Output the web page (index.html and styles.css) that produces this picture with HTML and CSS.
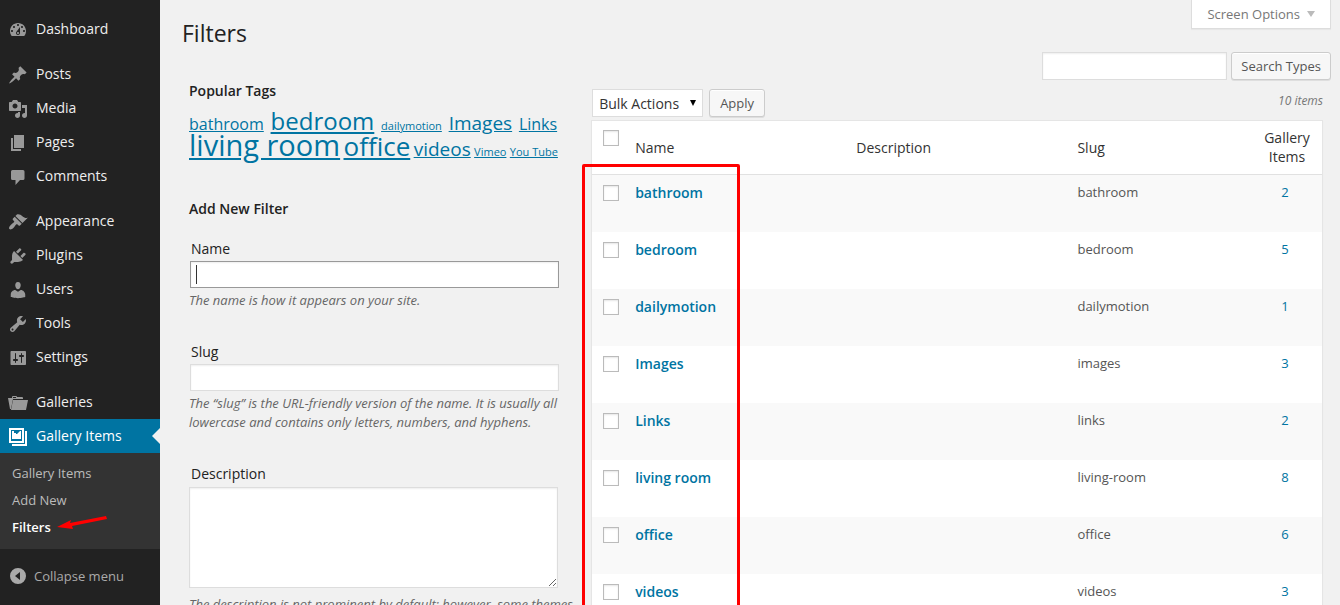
FILE: index.html
```html
<!DOCTYPE html>
<html lang="en">
<head>
<meta charset="utf-8">
<title>Filters</title>
<link rel="stylesheet" href="styles.css">
</head>
<body>
<div class="admin">
  <nav class="sidebar" aria-label="Main menu">
    <ul class="menu">
      <li><a href="#" class="menu-link"><svg viewBox="0 0 20 20"><path d="M3.76 16h12.48c1.1-1.37 1.76-3.11 1.76-5 0-4.42-3.58-8-8-8s-8 3.58-8 8c0 1.89.66 3.63 1.76 5zM10 4c.55 0 1 .45 1 1s-.45 1-1 1-1-.45-1-1 .45-1 1-1zM6 6c.55 0 1 .45 1 1s-.45 1-1 1-1-.45-1-1 .45-1 1-1zm8 0c.55 0 1 .45 1 1s-.45 1-1 1-1-.45-1-1 .45-1 1-1zm-5.37 5.55L12 7v6c0 1.1-.9 2-2 2s-2-.9-2-2c0-.57.24-1.08.63-1.45zM4 10c.55 0 1 .45 1 1s-.45 1-1 1-1-.45-1-1 .45-1 1-1zm12 0c.55 0 1 .45 1 1s-.45 1-1 1-1-.45-1-1 .45-1 1-1zm-5 3c0-.55-.45-1-1-1s-1 .45-1 1 .45 1 1 1 1-.45 1-1z"/></svg>Dashboard</a></li>
    </ul>
    <ul class="menu">
      <li><a href="#" class="menu-link"><svg viewBox="0 0 20 20"><path d="M10.44 3.02l1.82-1.82 6.36 6.35-1.83 1.82c-1.05-.68-2.48-.57-3.41.36l-.75.75c-.92.93-1.04 2.35-.35 3.41l-1.83 1.82-2.41-2.41-2.8 2.79c-.42.42-3.38 2.71-3.8 2.29s1.86-3.39 2.28-3.81l2.79-2.79L4.1 9.36l1.83-1.82c1.05.69 2.48.57 3.4-.36l.75-.75c.93-.92 1.05-2.35.36-3.41z"/></svg>Posts</a></li>
      <li><a href="#" class="menu-link"><svg viewBox="0 0 20 20"><path d="M13 11V4c0-.55-.45-1-1-1h-1.67L9 1H5L3.67 3H2c-.55 0-1 .45-1 1v7c0 .55.45 1 1 1h10c.55 0 1-.45 1-1zM7 4.5c1.38 0 2.5 1.12 2.5 2.5S8.38 9.5 7 9.5 4.5 8.38 4.5 7 5.62 4.5 7 4.5zM14 6h5v10.5c0 1.38-1.12 2.5-2.5 2.5S14 17.88 14 16.5s1.12-2.5 2.5-2.5c.17 0 .34.02.5.05V9h-3V6zm-4 8.05V13h2v3.5c0 1.38-1.12 2.5-2.5 2.5S7 17.88 7 16.5 8.12 14 9.5 14c.17 0 .34.02.5.05z"/></svg>Media</a></li>
      <li><a href="#" class="menu-link"><svg viewBox="0 0 20 20"><path d="M6 15V2h10v13H6zm-1 1h8v2H3V5h2v11z"/></svg>Pages</a></li>
      <li><a href="#" class="menu-link"><svg viewBox="0 0 20 20"><path d="M4.500 3h10.500q1.500 0 1.500 1.500v7q0 1.500-1.500 1.500h-3l-4.500 5v-5h-3q-1.500 0-1.500-1.500v-7q0-1.500 1.500-1.500z"/></svg>Comments</a></li>
    </ul>
    <ul class="menu">
      <li><a href="#" class="menu-link"><svg viewBox="0 0 20 20"><path d="M14.48 11.06L7.41 3.99l1.5-1.5c.5-.56 2.3-.47 3.51.32 1.21.8 1.43 1.28 2.91 2.1 1.18.64 2.45 1.26 4.45.85zm-.71.71L6.7 4.7 4.93 6.47c-.39.39-.39 1.02 0 1.41l1.06 1.06c.39.39.39 1.03 0 1.42-.6.6-1.43 1.11-2.21 1.69-.35.26-.7.53-1.01.84C1.43 14.23.4 16.08 1.4 17.07c.99 1 2.84-.03 4.18-1.36.31-.31.58-.66.85-1.02.57-.78 1.08-1.61 1.69-2.21.39-.39 1.02-.39 1.41 0l1.06 1.06c.39.39 1.02.39 1.41 0z"/></svg>Appearance</a></li>
      <li><a href="#" class="menu-link"><svg viewBox="0 0 20 20"><path d="M13.11 4.36L9.87 7.6 8 5.73l3.24-3.24c.35-.34 1.05-.2 1.56.32.52.51.66 1.21.31 1.55zm-8 1.77l.91-1.12 9.01 9.01-1.19.84c-.71.71-2.63 1.16-3.82 1.16H6.14L4.9 17.26c-.59.59-1.54.59-2.12 0-.59-.58-.59-1.53 0-2.12l1.24-1.24v-3.88c0-1.13.4-3.19 1.09-3.89zm7.26 3.97l3.24-3.24c.34-.35 1.04-.21 1.55.31.52.51.66 1.21.31 1.55l-3.24 3.25z"/></svg>Plugins</a></li>
      <li><a href="#" class="menu-link"><svg viewBox="0 0 20 20"><path d="M10 9.250c-2.270 0-2.730-3.440-2.730-3.440C7 4.020 7.820 2 9.970 2c2.160 0 2.980 2.020 2.710 3.810 0 0-.41 3.440-2.680 3.440zm0 2.570L12.720 10c2.390 0 4.520 2.330 4.520 4.530v2.490s-3.650 1.130-7.240 1.130c-3.650 0-7.240-1.130-7.240-1.130v-2.490c0-2.250 1.940-4.480 4.470-4.480z"/></svg>Users</a></li>
      <li><a href="#" class="menu-link"><svg viewBox="0 0 20 20"><path d="M16.68 9.77c-1.34 1.34-3.3 1.67-4.95.99l-5.41 6.52c-.99.99-2.59.99-3.58 0s-.99-2.59 0-3.57l6.52-5.42c-.68-1.65-.35-3.61.99-4.95 1.28-1.28 3.12-1.62 4.72-1.06l-2.89 2.89 2.82 2.82 2.86-2.87c.53 1.58.18 3.39-1.08 4.65zM3.810 16.210c.4.39 1.040.39 1.430 0 .4-.4.4-1.040 0-1.430-.39-.4-1.030-.4-1.430 0-.39.39-.39 1.030 0 1.430z"/></svg>Tools</a></li>
      <li><a href="#" class="menu-link"><svg viewBox="0 0 20 20"><path d="M18 16V4c0-.55-.45-1-1-1H3.500c-.55 0-1 .45-1 1v12c0 .55.45 1 1 1h13.500c.55 0 1-.45 1-1zM8 11h1c.55 0 1 .45 1 1s-.45 1-1 1H8v1.500c0 .28-.22.5-.5.5s-.5-.22-.5-.5V13H6c-.55 0-1-.45-1-1s.45-1 1-1h1V5.500c0-.28.22-.5.5-.5s.5.22.5.5V11zm5-2h-1c-.55 0-1-.45-1-1s.45-1 1-1h1V5.500c0-.28.22-.5.5-.5s.5.22.5.5V7h1c.55 0 1 .45 1 1s-.45 1-1 1h-1v5.500c0 .28-.22.5-.5.5s-.5-.22-.5-.5V9z"/></svg>Settings</a></li>
    </ul>
    <ul class="menu">
      <li><a href="#" class="menu-link"><svg viewBox="0 0 20 20"><path fill-rule="evenodd" d="M0 5h4V4q0-1 1-1h3q1 0 1 1h5q1 0 1 1v1H5L3 16H2zM5 4v1h3V4z"/><path d="M5 7h15l-2 10H3z"/></svg>Galleries</a></li>
      <li class="current">
        <a href="#" class="menu-link"><svg viewBox="0 0 20 20"><path fill-rule="evenodd" d="M1 1h15v15H1zM3 3v11h11V3zM17 4h2v15H4v-2h13z"/><path d="M4 4h2v2h2v1h1l3-3h1v8H4zM4 6" /></svg>Gallery Items</a>
        <ul class="submenu">
          <li><a href="#">Gallery Items</a></li>
          <li><a href="#">Add New</a></li>
          <li><a href="#" class="active" aria-current="page">Filters</a><svg class="pointer" viewBox="0 0 50 14"><path d="M0 11L14 4l-1 3L49 0l1 3-35 7 1 3z"/></svg></li>
        </ul>
      </li>
    </ul>
    <button type="button" class="collapse"><svg viewBox="0 0 20 20"><path fill-rule="evenodd" d="M10 2a8 8 0 1 0 0 16 8 8 0 0 0 0-16zM12 6v8l-5-4z"/></svg>Collapse menu</button>
  </nav>

  <main class="content">
    <button type="button" class="screen-options">Screen Options<span class="caret-down"></span></button>
    <h1>Filters</h1>
    <div class="columns">
      <div class="col-left">
        <section class="tags">
          <h2>Popular Tags</h2>
          <p class="cloud"><a href="#" class="t2">bathroom</a>&nbsp; <a href="#" class="t4">bedroom</a>&nbsp; <a href="#" class="t1">dailymotion</a>&nbsp; <a href="#" class="t3">Images</a>&nbsp; <a href="#" class="t2">Links</a> <a href="#" class="t6">living room</a> <a href="#" class="t5">office</a> <a href="#" class="t3">videos</a> <a href="#" class="t1">Vimeo</a> <a href="#" class="t1">You Tube</a></p>
        </section>
        <form class="add-form">
          <h2>Add New Filter</h2>
          <div class="field">
            <label for="f-name">Name</label>
            <div class="focus-wrap"><input type="text" id="f-name" class="focused"><span class="text-caret"></span></div>
            <p>The name is how it appears on your site.</p>
          </div>
          <div class="field">
            <label for="f-slug">Slug</label>
            <input type="text" id="f-slug">
            <p>The “slug” is the URL-friendly version of the name. It is usually all lowercase and contains only letters, numbers, and hyphens.</p>
          </div>
          <div class="field">
            <label for="f-desc">Description</label>
            <textarea id="f-desc"></textarea>
            <p>The description is not prominent by default; however, some themes may show it.</p>
          </div>
        </form>
      </div>

      <div class="col-right">
        <form class="search"><input type="search" aria-label="Search Types"><button type="button" class="btn">Search Types</button></form>
        <div class="list">
          <div class="tablenav">
            <div class="select-wrap"><select aria-label="Bulk actions"><option>Bulk Actions</option></select></div>
            <button type="button" class="btn">Apply</button>
            <span class="count">10 items</span>
          </div>
          <div class="table-wrap">
            <table>
              <thead>
                <tr><th class="check"><input type="checkbox" aria-label="Select all"></th><th class="name">Name</th><th class="desc">Description</th><th class="slug">Slug</th><th class="posts">Gallery Items</th></tr>
              </thead>
              <tbody>
                <tr><td class="check"><input type="checkbox" aria-label="Select bathroom"></td><td><a class="row-title" href="#">bathroom</a></td><td></td><td>bathroom</td><td class="posts"><a href="#">2</a></td></tr>
                <tr><td class="check"><input type="checkbox" aria-label="Select bedroom"></td><td><a class="row-title" href="#">bedroom</a></td><td></td><td>bedroom</td><td class="posts"><a href="#">5</a></td></tr>
                <tr><td class="check"><input type="checkbox" aria-label="Select dailymotion"></td><td><a class="row-title" href="#">dailymotion</a></td><td></td><td>dailymotion</td><td class="posts"><a href="#">1</a></td></tr>
                <tr><td class="check"><input type="checkbox" aria-label="Select Images"></td><td><a class="row-title" href="#">Images</a></td><td></td><td>images</td><td class="posts"><a href="#">3</a></td></tr>
                <tr><td class="check"><input type="checkbox" aria-label="Select Links"></td><td><a class="row-title" href="#">Links</a></td><td></td><td>links</td><td class="posts"><a href="#">2</a></td></tr>
                <tr><td class="check"><input type="checkbox" aria-label="Select living room"></td><td><a class="row-title" href="#">living room</a></td><td></td><td>living-room</td><td class="posts"><a href="#">8</a></td></tr>
                <tr><td class="check"><input type="checkbox" aria-label="Select office"></td><td><a class="row-title" href="#">office</a></td><td></td><td>office</td><td class="posts"><a href="#">6</a></td></tr>
                <tr><td class="check"><input type="checkbox" aria-label="Select videos"></td><td><a class="row-title" href="#">videos</a></td><td></td><td>videos</td><td class="posts"><a href="#">3</a></td></tr>
              </tbody>
            </table>
            <div class="highlight"></div>
          </div>
        </div>
      </div>
    </div>
  </main>
</div>
</body>
</html>
```
FILE: styles.css
```css
* { box-sizing: border-box; }
body {
  margin: 0;
  height: 100vh;
  overflow: hidden;
  background: #f1f1f1;
  color: #333;
  font: 13px/19px "Open Sans", sans-serif;
}
a { color: #0074a2; }
h1, h2, p, ul { margin: 0; padding: 0; }
ul { list-style: none; }
button, input, select, textarea { font: inherit; }
.admin { display: flex; min-height: 100vh; }

/* Sidebar */
.sidebar { flex: none; width: 160px; padding-top: 12px; background: #222; }
.menu { margin-bottom: 11px; }
.menu-link {
  display: flex;
  gap: 8px;
  height: 34px;
  padding: 8px 8px 0;
  color: #eee;
  font-size: 14px;
  line-height: 18px;
  text-decoration: none;
}
.menu-link svg { width: 20px; height: 20px; fill: #999; flex: none; }
.current { position: relative; }
.current .menu-link { background: #0074a2; color: #fff; }
.current .menu-link svg { fill: #fff; }
.current::after {
  content: "";
  position: absolute;
  top: 9px;
  right: 0;
  border: 8px solid transparent;
  border-right-color: #f1f1f1;
  border-left: 0;
}
.submenu { padding: 7px 0 8px; background: #333; }
.submenu li { display: flex; align-items: center; gap: 6px; height: 27px; padding: 0 12px; }
.submenu a { color: #bbb; text-decoration: none; }
.submenu .active { color: #fff; font-weight: 600; }
.pointer { width: 50px; height: 14px; fill: #f00; margin-bottom: 10px; }
.collapse {
  display: flex;
  align-items: center;
  gap: 6px;
  width: 100%;
  height: 34px;
  margin-top: -1px;
  padding: 0 8px;
  border: 0;
  background: none;
  color: #aaa;
}
.collapse svg { width: 20px; height: 20px; fill: #aaa; }

/* Page */
.content { position: relative; flex: 1; min-width: 0; padding: 19px 9px 0 22px; }
.screen-options {
  position: absolute;
  top: 0;
  right: 9px;
  display: flex;
  align-items: center;
  gap: 7px;
  height: 29px;
  padding: 0 15px;
  border: 1px solid #ddd;
  border-top: 0;
  background: #fff;
  color: #777;
  box-shadow: 0 1px 1px rgba(0, 0, 0, .04);
}
.caret-down { border: 4px solid transparent; border-top: 6px solid #bbb; border-bottom: 0; }
h1 { color: #222; font-size: 23px; font-weight: 400; line-height: 29px; }
.columns { display: grid; grid-template-columns: 35fr 65fr; }
.columns > * { min-width: 0; }

h2 { color: #222; font-size: 14px; font-weight: 600; line-height: 20px; }
.col-left { padding: 33px 7px 0; }
.cloud { margin-top: 10px; }
.t1 { font-size: 11px; }
.t2 { font-size: 16px; }
.t3 { font-size: 19px; }
.t4 { font-size: 24px; }
.t5 { font-size: 26px; }
.t6 { font-size: 29px; }
.add-form { margin-top: 38px; }
.field { padding: 10px 0 8px; margin-bottom: 4px; }
.field label { display: block; padding: 10px 2px 1px; color: #222; font-size: 14px; line-height: 20px; }
.field p { color: #666; font-style: italic; padding-top: 2px; }
input[type="text"], input[type="search"], textarea {
  display: block;
  width: 95%;
  height: 27px;
  margin: 1px;
  padding: 3px 5px;
  border: 1px solid #ddd;
  border-radius: 0;
  outline: 0;
  background: #fff;
  box-shadow: inset 0 1px 2px rgba(0, 0, 0, .07);
}
.focus-wrap { position: relative; }
input.focused { border-color: #999; }
.text-caret { position: absolute; left: 7px; top: 4px; width: 1px; height: 19px; background: #333; }
textarea { height: 101px; margin: 2px 0 5px; resize: both; }

/* List */
.col-right { padding-top: 4px; }
.search { display: flex; gap: 4px; justify-content: flex-end; }
.search input[type="search"] { width: 185px; height: 28px; margin: 0; }
.btn {
  height: 28px;
  padding: 0 10px;
  border: 1px solid #ccc;
  border-radius: 3px;
  background: #f7f7f7;
  color: #555;
  box-shadow: inset 0 1px 0 #fff, 0 1px 0 rgba(0, 0, 0, .08);
}
.search .btn { padding: 0 9px; }
.list { padding: 9px 8px 0 7px; }
.tablenav { display: flex; gap: 6px; margin-bottom: 3px; padding-left: 1px; }
.select-wrap { position: relative; }
.select-wrap::after {
  content: "";
  position: absolute;
  top: 11px;
  right: 7px;
  border: 3px solid transparent;
  border-top: 6px solid #000;
  border-bottom: 0;
  pointer-events: none;
}
.tablenav select {
  appearance: none;
  display: block;
  width: 111px;
  height: 28px;
  padding: 0 6px;
  border: 1px solid #ddd;
  border-radius: 0;
  background: #fff;
  color: #333;
  font-size: 14px;
}
.count { margin-left: auto; color: #777; font-size: 12px; font-style: italic; line-height: 24px; }
.table-wrap { position: relative; }
table {
  width: 100%;
  table-layout: fixed;
  border-collapse: separate;
  border-spacing: 0;
  border: 1px solid #e5e5e5;
  background: #fff;
  box-shadow: 0 1px 1px rgba(0, 0, 0, .04);
}
th, td { padding: 8px 10px; text-align: left; font-weight: 400; }
th { height: 54px; padding: 7px 10px 8px; border-bottom: 1px solid #e1e1e1; color: #333; font-size: 14px; vertical-align: middle; }
td { height: 57px; color: #555; vertical-align: top; }
tbody tr:nth-child(odd) { background: #f9f9f9; }
.check { width: 33px; padding: 10px 0 0 11px; vertical-align: top; }
th.check { padding: 9px 0 0 11px; vertical-align: top; }
.name, .desc { width: 30.3%; }
.posts { width: 74px; text-align: center; }
th.posts { padding-left: 14px; text-align: center; }
td a { text-decoration: none; }
.row-title { font-size: 14px; font-weight: 600; }
input[type="checkbox"] {
  appearance: none;
  display: block;
  width: 16px;
  height: 16px;
  margin: 0;
  border: 1px solid #bbb;
  background: #fff;
  box-shadow: inset 0 1px 2px rgba(0, 0, 0, .1);
}
.highlight {
  position: absolute;
  left: -9px;
  top: 44px;
  width: 158px;
  height: 100vh;
  border: 3px solid #f00;
  border-radius: 2px;
}
```
